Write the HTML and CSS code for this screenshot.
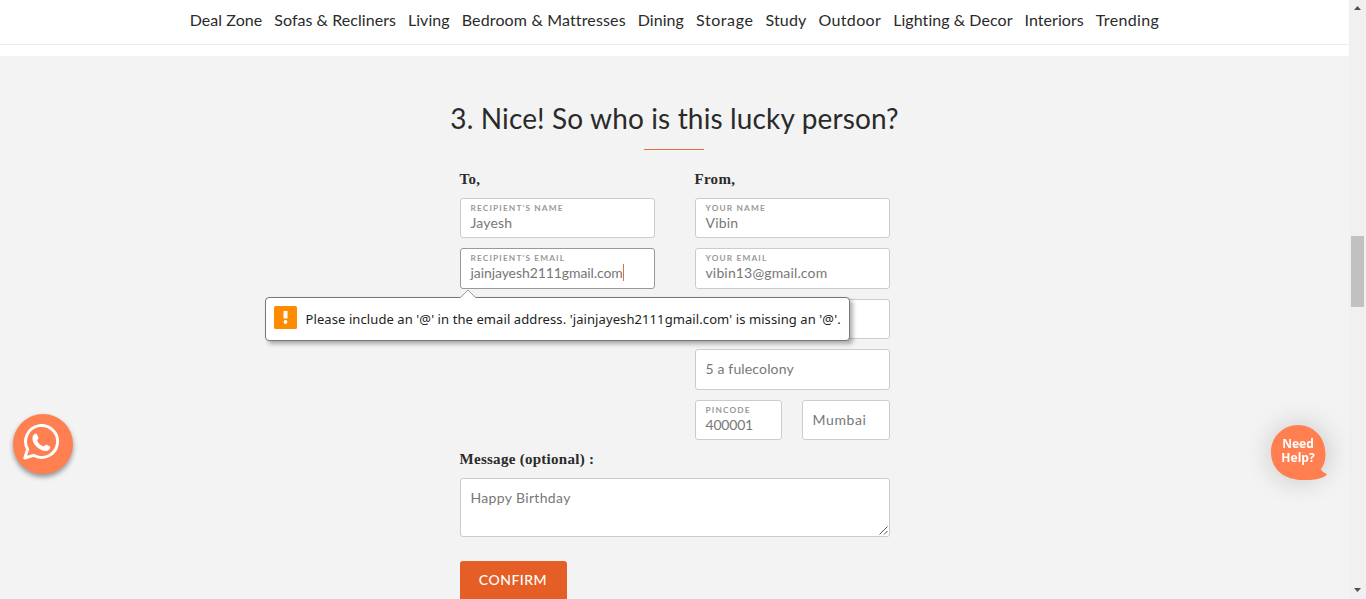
FILE: index.html
```html
<!DOCTYPE html>
<html lang="en">
<head>
<meta charset="utf-8">
<title>Gift card</title>
<link rel="stylesheet" href="styles.css">
</head>
<body>
<div class="page">
  <nav class="nav">
    <a>Deal Zone</a><a>Sofas &amp; Recliners</a><a>Living</a><a class="track-m">Bedroom &amp; Mattresses</a><a>Dining</a><a class="track-xl">Storage</a><a class="track-m">Study</a><a class="track-l">Outdoor</a><a>Lighting &amp; Decor</a><a>Interiors</a><a class="track-l">Trending</a>
  </nav>
  <main class="main">
    <h1 class="title">3. Nice! So who is this lucky person?</h1>
    <form class="form">
      <div class="columns">
        <section class="column">
          <h2 class="legend">To,</h2>
          <div class="field"><label>RECIPIENT'S NAME</label><p>Jayesh</p></div>
          <div class="field field-focus"><label>RECIPIENT'S EMAIL</label><p><span class="typed">jainjayesh2111gmail.com</span></p>
            <div class="tooltip">
              <svg class="tip-arrow" width="18" height="9" viewBox="0 0 18 9"><path d="M1 9L9 1L17 9" fill="#fff" stroke="#999"/></svg>
              <svg class="tip-icon" width="23" height="23" viewBox="0 0 23 23"><rect width="23" height="23" rx="1.500" fill="#ff8c00"/><path d="M9.500 5h4v7.500h-4z" fill="#fff"/><circle cx="11.500" cy="16" r="1.900" fill="#fff"/></svg>
              <span class="tip-text">Please include an '@' in the email address. 'jainjayesh2111gmail.com' is missing an '@'.</span>
            </div>
          </div>
        </section>
        <section class="column">
          <h2 class="legend">From,</h2>
          <div class="field"><label>YOUR NAME</label><p>Vibin</p></div>
          <div class="field"><label>YOUR EMAIL</label><p>vibin13@gmail.com</p></div>
          <div class="field"></div>
          <div class="field field-plain"><p>5 a fulecolony</p></div>
          <div class="pair">
            <div class="field"><label>PINCODE</label><p class="digits">400001</p></div>
            <div class="field field-plain"><p class="city">Mumbai</p></div>
          </div>
        </section>
      </div>
      <h2 class="legend message-legend">Message (optional) :</h2>
      <div class="message">Happy Birthday
        <svg class="grip" width="9" height="9" viewBox="0 0 9 9"><path d="M0.500 8.500L8.500 0.500M5 8.500L8.500 5" stroke="#555" fill="none"/></svg>
      </div>
      <div class="confirm">CONFIRM</div>
    </form>
  </main>
</div>
<aside class="scrollbar">
  <svg width="17" height="17" viewBox="0 0 17 17"><path d="M5 10L8.500 6L12 10z" fill="#505050"/></svg>
  <div class="thumb"></div>
  <svg class="down" width="17" height="17" viewBox="0 0 17 17"><path d="M5 6L8.500 10L12 6z" fill="#505050"/></svg>
</aside>
<div class="whatsapp">
  <svg width="36" height="36" viewBox="0 0 36 36"><path d="M1.800 34L4.600 25.300A16 16 0 1 1 10.500 31.300z" fill="none" stroke="#fff" stroke-width="2.900" stroke-linejoin="round"/><path d="M11 10.400c1-1.200 2.500-1.200 3.100 0l1.400 3.300c.4 1-1.500 2.300-1.300 3 .9 2.500 3.500 4.800 6.200 5.600.9.200 2.100-2 3.100-1.600l3.200 1.600c1.500.8-.2 3.700-2.200 4.400C18.500 28.500 9 20.500 9.400 14c.1-1.500.7-2.800 1.600-3.600z" fill="#fff"/></svg>
</div>
<div class="help">
  <svg width="57" height="56" viewBox="0 0 57 56"><path d="M27 0C42 0 54 12 54.500 27C55 35 53 40 50 44C51 47 54 48 56 49C54 53 44 55 35 55C13 56 0 44 0 27C0 12 12 0 27 0z" fill="#ff7f50"/></svg>
  <div class="help-text">Need<br>Help?</div>
</div>
</body>
</html>
```
FILE: styles.css
```css
* { box-sizing: border-box; }
body { margin: 0; width: 1366px; height: 599px; overflow: hidden; display: flex; font-family: Lato, sans-serif; background: #f3f3f3; }
.page { width: 1349px; height: 599px; overflow: hidden; }
.nav { height: 45px; display: flex; justify-content: center; gap: 12px; background: #fff; border-bottom: 1px solid #ececec; line-height: 39px; font-size: 16px; letter-spacing: .05px; color: #2a2a2a; white-space: nowrap; }
.track-m { letter-spacing: .15px; }
.track-l { letter-spacing: .36px; }
.track-xl { letter-spacing: .59px; }
.main { border-top: 11px solid #fff; padding-top: 45px; display: flex; flex-direction: column; align-items: center; }
.title { margin: 0; height: 49px; line-height: 35px; font-size: 28px; font-weight: 400; letter-spacing: .14px; color: #2a2a2a; position: relative; white-space: nowrap; }
.title::after { content: ""; position: absolute; width: 60px; height: 1px; background: #e4703e; left: calc(50% - 30.700px); bottom: 0; }
.form { width: 430px; }
.columns { display: grid; grid-template-columns: 195px 195px; gap: 40px; }
.column { display: flex; flex-direction: column; gap: 10px; }
.legend { margin: 18px 0 0; height: 20px; font: bold 15px/23px "Liberation Serif", serif; letter-spacing: .28px; color: #2a2a2a; }
.message-legend { margin-top: 9px; line-height: 20px; }
.field { height: 40.400px; border: 1px solid #ccc; border-radius: 3px; background: #fff; padding: 4px 10px; position: relative; color: #777; }
.field label { display: block; height: 10px; font-weight: 700; font-size: 8.300px; line-height: 10px; letter-spacing: 1.150px; color: #999; white-space: nowrap; }
.field p { margin: 0; font-size: 14px; line-height: 20px; letter-spacing: .15px; white-space: nowrap; }
.field-plain p { padding-top: 5px; }
.field .digits { letter-spacing: -.2px; }
.field .city { letter-spacing: .6px; }
.field-focus { border-color: #999; }
.typed { border-right: 1px solid #e4703e; letter-spacing: -.08px; }
.pair { display: grid; grid-template-columns: 87px 88px; gap: 20px; }
.tooltip { position: absolute; z-index: 2; left: -196px; top: 48px; width: 585px; height: 44px; border: 1px solid #777; border-radius: 4px; background: #fff; box-shadow: 3px 3px 4px rgba(0,0,0,.3); display: flex; align-items: center; padding: 0 8px; gap: 9px; }
.tip-arrow { position: absolute; left: 193px; top: -9px; }
.tip-icon { margin-top: -3px; flex: none; }
.tip-text { font: 13px "Noto Sans", sans-serif; letter-spacing: .09px; color: #222; white-space: nowrap; }
.message { margin-top: 9px; height: 59px; border: 1px solid #ccc; border-radius: 3px; background: #fff; padding: 9px 10px; font-size: 14px; line-height: 20px; letter-spacing: .34px; color: #777; position: relative; }
.grip { position: absolute; right: 1px; bottom: 1px; }
.confirm { margin-top: 24px; width: 107px; height: 39px; border-radius: 3px 3px 0 0; background: #e55e25; color: #fff; font-size: 14px; font-weight: 500; line-height: 38px; letter-spacing: .5px; text-align: center; }
.scrollbar { width: 17px; height: 599px; background: #f0f0f0; display: flex; flex-direction: column; align-items: center; }
.thumb { width: 13px; height: 71px; margin-top: 219px; background: #c1c1c1; }
.down { margin-top: auto; }
.whatsapp { position: fixed; left: 13px; top: 414px; width: 60px; height: 60px; border-radius: 50%; background: #ff7f50; box-shadow: 0 3px 5px rgba(0,0,0,.4); padding: 10px; }
.help { position: fixed; left: 1271px; top: 425px; width: 57px; height: 56px; border-radius: 50%; }
.help::before { content: ""; position: absolute; inset: 2px; border-radius: 50%; box-shadow: 0 0 28px 2px rgba(0,0,0,.18); }
.help svg { position: relative; }
.help-text { position: absolute; inset: 12px 3px auto 0; text-align: center; font: bold 12px/14px "Open Sans", sans-serif; color: #fff; }
```
